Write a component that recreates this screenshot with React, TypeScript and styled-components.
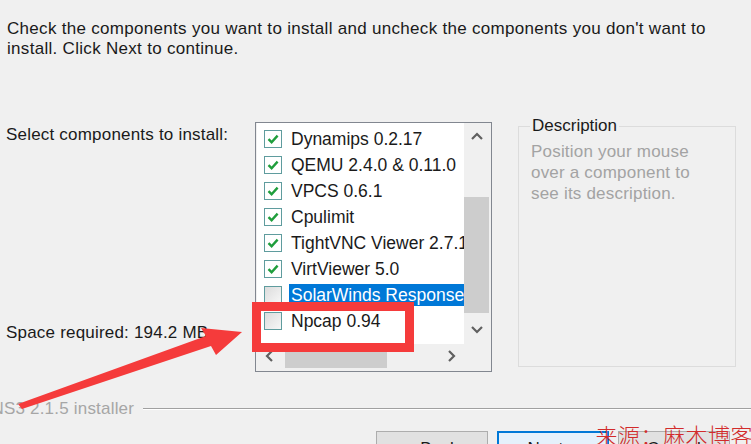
import React from "react";
import styled, { createGlobalStyle } from "styled-components";

const Global = createGlobalStyle`
  html, body {
    margin: 0;
    padding: 0;
    background: #f0f0f0;
  }
`;

const Page = styled.div`
  position: relative;
  width: 751px;
  height: 444px;
  overflow: hidden;
  background: #f0f0f0;
  font-family: "Liberation Sans", Arial, sans-serif;
  font-size: 17px;
  letter-spacing: 0.2px;
  color: #1a1a1a;
`;

const Intro = styled.div`
  padding: 19px 0 0 7px;
  line-height: 20px;
  width: 740px;
  letter-spacing: 0.3px;
`;

const Main = styled.div`
  display: flex;
  margin-top: 63px;
  height: 250px;
`;

const LeftCol = styled.div`
  width: 255px;
  display: flex;
  flex-direction: column;
  justify-content: space-between;
  padding: 3px 0 29px 6px;
  box-sizing: border-box;
`;

const ListBox = styled.div`
  width: 237px;
  height: 250px;
  box-sizing: border-box;
  border: 1px solid #828790;
  background: #f0f0f0;
  display: grid;
  grid-template-columns: 207px 25px;
  grid-template-rows: 221px 24px;
  padding: 0 1px 0 1px;
  letter-spacing: 0;
`;

const Items = styled.div`
  background: #fff;
  padding-top: 3px;
  overflow: hidden;
`;

const Row = styled.div`
  display: flex;
  align-items: center;
  height: 26px;
  padding-left: 7px;
  white-space: nowrap;
`;

const Box = styled.span<{ $on: boolean }>`
  width: 16px;
  height: 16px;
  flex: none;
  border: 1px solid #5f9c9e;
  background: ${(p) => (p.$on ? "#fff" : "linear-gradient(135deg, #dcdcdc, #f7f7f7)")};
  display: flex;
  align-items: center;
  justify-content: center;
  margin-right: 9px;
`;

const Label = styled.span<{ $sel: boolean }>`
  font-size: 17.5px;
  line-height: 22px;
  padding: 0 2px;
  margin-left: -2px;
  flex: 1;
  color: ${(p) => (p.$sel ? "#fff" : "#1a1a1a")};
  background: ${(p) => (p.$sel ? "#0078d7" : "transparent")};
`;

const VScroll = styled.div`
  display: grid;
  grid-template-rows: 28px 46px 116px 1fr;
  background: #f0f0f0;
`;

const HScroll = styled.div`
  display: grid;
  grid-template-columns: 26px 2px 102px 1fr 26px;
  background: #f0f0f0;
`;

const Arrow = styled.div`
  display: flex;
  align-items: center;
  justify-content: center;
  color: #606060;
`;

const Thumb = styled.div`
  background: #cdcdcd;
`;

const Corner = styled.div`
  background: #f0f0f0;
`;

const Group = styled.fieldset`
  margin: 0 0 0 26px;
  padding: 0 12px;
  width: 218px;
  height: 250px;
  box-sizing: border-box;
  border: 1px solid #dcdcdc;
  position: relative;
  top: -5px;
  legend {
    padding: 0 2px;
    margin-left: -1px;
    color: #1a1a1a;
    line-height: 18px;
    letter-spacing: 0;
  }
`;

const DescText = styled.div`
  color: #a3a3a3;
  line-height: 21px;
  margin-top: 6px;
`;

const Brand = styled.div`
  display: flex;
  align-items: center;
  margin-top: 27px;
  margin-left: -22px;
  color: #a6a6a6;
  gap: 9px;
`;

const Rule = styled.div`
  flex: 1;
  height: 0;
  border-top: 1px solid #a0a0a0;
  border-bottom: 1px solid #fff;
`;

const Buttons = styled.div`
  display: flex;
  gap: 9px;
  margin: 12px 0 0 376px;
`;

const Button = styled.div<{ $primary?: boolean }>`
  width: 112px;
  height: 34px;
  box-sizing: border-box;
  border: 1px solid ${(p) => (p.$primary ? "#0078d7" : "#adadad")};
  box-shadow: ${(p) => (p.$primary ? "inset 0 0 0 1px #0078d7" : "none")};
  background: ${(p) => (p.$primary ? "#e5f1fb" : "#e1e1e1")};
  display: flex;
  justify-content: center;
  padding-top: 7px;
`;

const Highlight = styled.div`
  position: absolute;
  left: 252px;
  top: 302px;
  width: 162px;
  height: 50px;
  box-sizing: border-box;
  border: 9px solid #f53b3b;
`;

const Overlay = styled.svg`
  position: absolute;
  left: 0;
  top: 0;
  pointer-events: none;
`;

const Watermark = styled.div`
  position: absolute;
  right: -2px;
  top: 418px;
  font-family: "Noto Sans CJK SC", sans-serif;
  font-weight: 300;
  font-size: 22px;
  letter-spacing: 0.5px;
  color: #d22b2b;
`;

const Check = () => (
  <svg width="14" height="14" viewBox="0 0 14 14">
    <path d="M2.5 7.2 L5.6 10.2 L11.6 3.6" fill="none" stroke="#1f9e3c" strokeWidth="2.4" />
  </svg>
);

const Chevron = ({ dir }: { dir: "up" | "down" | "left" | "right" }) => {
  const d = {
    up: "M3 10 L8 5 L13 10",
    down: "M3 6 L8 11 L13 6",
    left: "M10 3 L5 8 L10 13",
    right: "M6 3 L11 8 L6 13",
  }[dir];
  return (
    <svg width="16" height="16" viewBox="0 0 16 16">
      <path d={d} fill="none" stroke="#606060" strokeWidth="2.2" />
    </svg>
  );
};

const components = [
  { name: "Dynamips 0.2.17", on: true },
  { name: "QEMU 2.4.0 & 0.11.0", on: true },
  { name: "VPCS 0.6.1", on: true },
  { name: "Cpulimit", on: true },
  { name: "TightVNC Viewer 2.7.10", on: true },
  { name: "VirtViewer 5.0", on: true },
  { name: "SolarWinds Response Time Viewer", on: false, sel: true },
  { name: "Npcap 0.94", on: false },
];

export default function App() {
  return (
    <Page>
      <Global />
      <Intro>
        Check the components you want to install and uncheck the components you don't want to
        install. Click Next to continue.
      </Intro>
      <Main>
        <LeftCol>
          <div>Select components to install:</div>
          <div>Space required: 194.2 MB</div>
        </LeftCol>
        <ListBox>
          <Items>
            {components.map((c) => (
              <Row key={c.name}>
                <Box $on={c.on}>{c.on && <Check />}</Box>
                <Label $sel={!!c.sel}>{c.name}</Label>
              </Row>
            ))}
          </Items>
          <VScroll>
            <Arrow>
              <Chevron dir="up" />
            </Arrow>
            <div />
            <Thumb />
            <Arrow>
              <Chevron dir="down" />
            </Arrow>
          </VScroll>
          <HScroll>
            <Arrow>
              <Chevron dir="left" />
            </Arrow>
            <div />
            <Thumb />
            <div />
            <Arrow>
              <Chevron dir="right" />
            </Arrow>
          </HScroll>
          <Corner />
        </ListBox>
        <Group>
          <legend>Description</legend>
          <DescText>
            Position your mouse
            <br />
            over a component to
            <br />
            see its description.
          </DescText>
        </Group>
      </Main>
      <Brand>
        <span>GNS3 2.1.5 installer</span>
        <Rule />
      </Brand>
      <Buttons>
        <Button>&lt; Back</Button>
        <Button $primary>Next &gt;</Button>
        <Button>Cancel</Button>
      </Buttons>
      <Highlight />
      <Overlay width="751" height="444">
        <polygon points="18,404 206,336 201,328 242,332 216,355 211,346 22,409" fill="#f53b3b" />
      </Overlay>
      <Watermark>来源：麻木博客</Watermark>
    </Page>
  );
}
